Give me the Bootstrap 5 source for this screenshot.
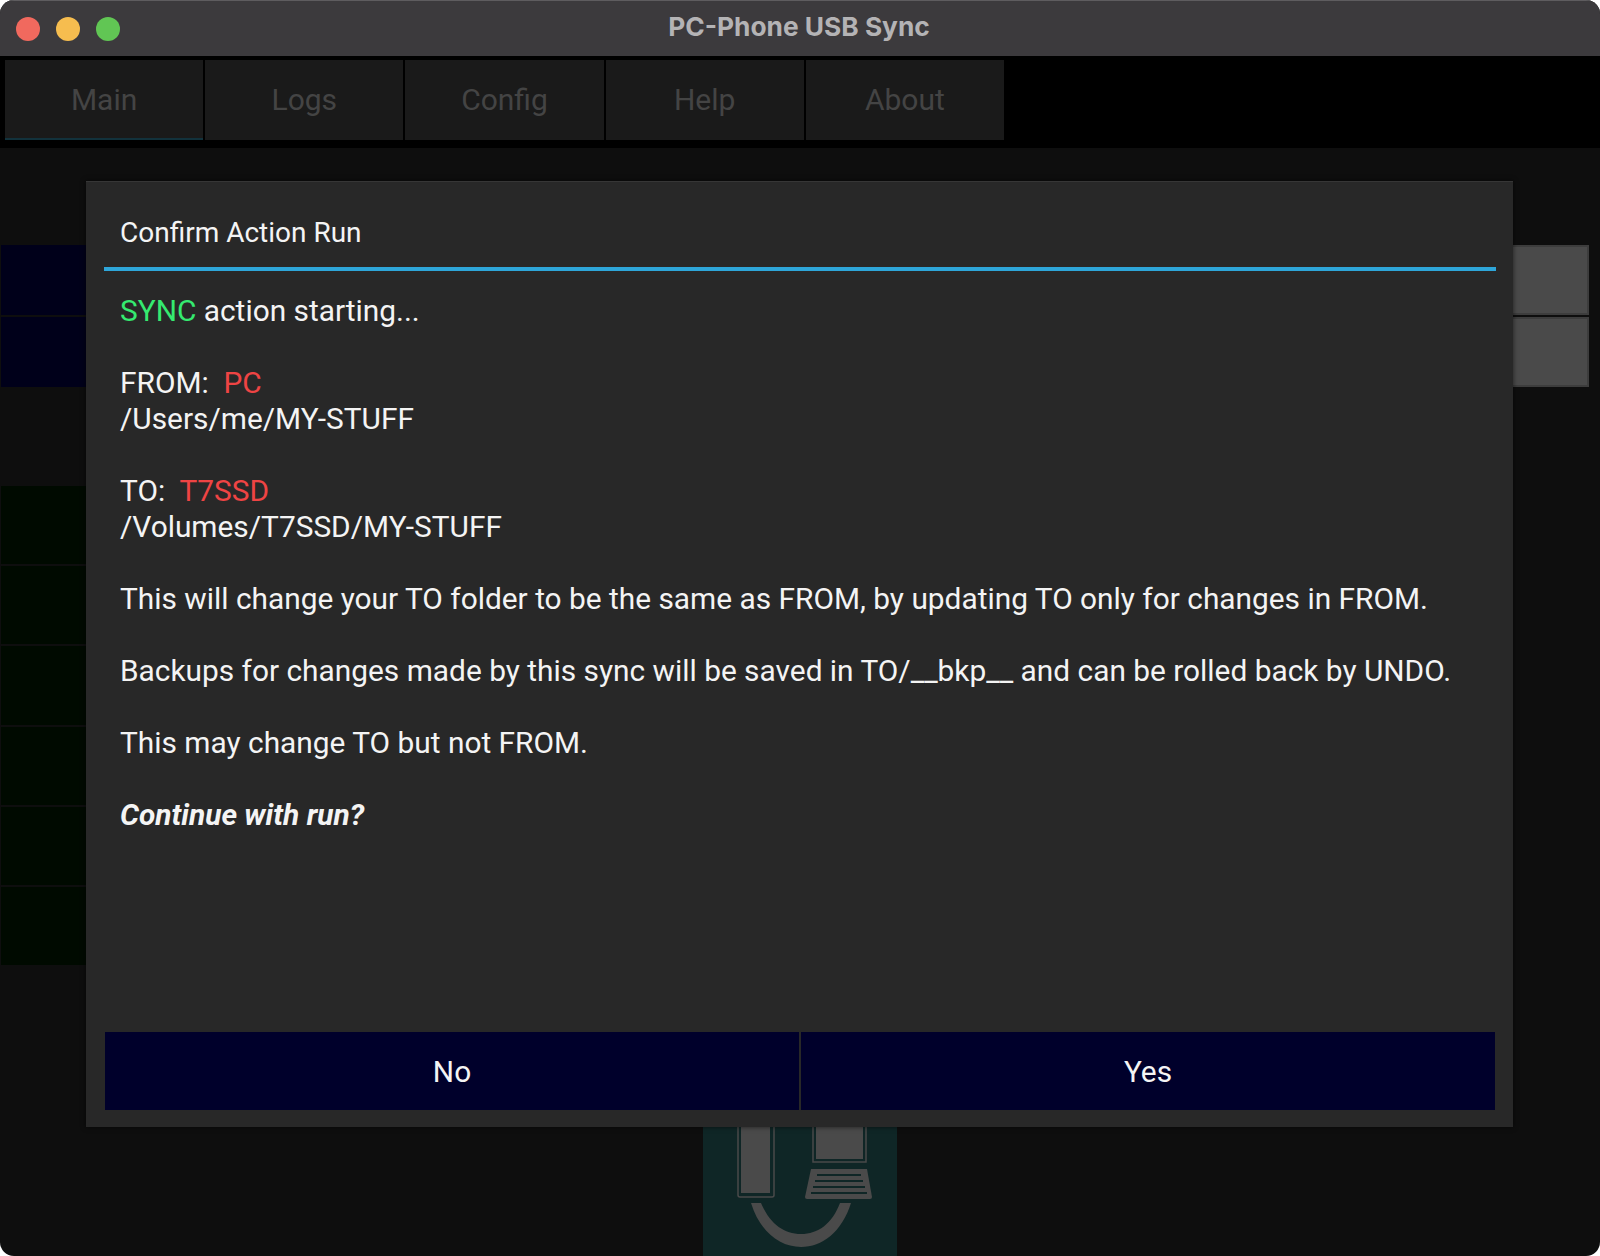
<!DOCTYPE html>
<html lang="en">
<head>
    <meta charset="UTF-8">
    <title>PC-Phone USB Sync</title>
    <link rel="stylesheet" href="https://cdn.jsdelivr.net/npm/bootstrap@5.3.0/dist/css/bootstrap.min.css">
    <style>
        html, body {
            height: 100%;
            background: #fff;
        }
        body {
            font-family: Roboto, sans-serif;
            overflow: hidden;
        }
        #win {
            position: relative;
            width: 1600px;
            height: 1256px;
            border-radius: 14px;
            overflow: hidden;
            background: #0e0e0e;
        }
        #titlebar {
            height: 56px;
            background: #3c3a3d;
            border-top: 1px solid #5e5c5f;
            padding: 0 16px;
        }
        .light-dots {
            gap: 16px;
        }
        .light-dot {
            width: 24px;
            height: 24px;
            border-radius: 50%;
        }
        #titlebar h1 {
            font-family: Inter, "Liberation Sans", sans-serif;
            font-size: 26.3px;
            font-weight: 700;
            color: #b4b3b5;
            margin: 0 0 4px;
        }
        #tabbar {
            height: 92px;
            background: #000;
            padding: 4px 5px 8px;
            gap: 2px;
        }
        .tab-btn {
            width: 198.2px;
            background: #1a1a1a;
            color: #444;
            font-size: 30px;
            border-bottom: 2px solid transparent;
        }
        .tab-on {
            border-bottom-color: #12323c;
        }
        #under {
            padding: 97px 11px 0 1px;
        }
        .pick-row {
            height: 70px;
            margin-bottom: 2px;
        }
        .pick-blue {
            background: #00001a;
        }
        .pick-grey {
            background: #4a4a4a;
            border: 2px solid #3d3d3d;
        }
        #green-rows {
            margin-top: 99px;
            width: 800px;
        }
        .green-row {
            height: 78.2px;
            margin-bottom: 2px;
            background: #000a00;
        }
        #logo-box {
            position: absolute;
            left: 703px;
            top: 1040px;
            width: 194px;
            height: 216px;
            background: #0f2626;
        }
        #dialog {
            position: absolute;
            left: 86px;
            top: 181px;
            width: 1427px;
            height: 946px;
            background: #282828;
            box-shadow: inset 0 1px 0 #363636, 0 0 5px rgba(0, 0, 0, 0.6);
            padding: 0 17px 17px 18px;
            color: #f4f4f4;
            font-size: 29.85px;
            line-height: 36px;
        }
        #dialog-title {
            height: 90px;
            padding: 0 16px 16px;
            border-bottom: 4px solid #2ea6d9;
            font-size: 28px;
        }
        #dialog-body {
            padding: 22px 16px 0;
        }
        #dialog-body p {
            margin-bottom: 36px;
        }
        .txt-green { color: #35ea70; }
        .txt-red { color: #ef4444; }
        #answers {
            gap: 2px;
            padding: 0 1px;
        }
        .ans-btn {
            height: 78px;
            padding-top: 8px;
            background: #00002b;
            color: #f4f4f4;
            font-size: 29.85px;
            border: 0;
            border-radius: 0;
        }
    </style>
</head>
<body>
    <div id="win">
        <div id="titlebar" class="d-flex align-items-center">
            <div class="light-dots d-flex">
                <div class="light-dot" style="background:#f1695e"></div>
                <div class="light-dot" style="background:#f6bd4f"></div>
                <div class="light-dot" style="background:#61c654"></div>
            </div>
            <h1 class="flex-grow-1 text-center">PC-Phone USB Sync</h1>
            <div style="width:106px"></div>
        </div>

        <div id="tabbar" class="d-flex">
            <div class="tab-btn tab-on d-flex align-items-center justify-content-center">Main</div>
            <div class="tab-btn d-flex align-items-center justify-content-center">Logs</div>
            <div class="tab-btn d-flex align-items-center justify-content-center">Config</div>
            <div class="tab-btn d-flex align-items-center justify-content-center">Help</div>
            <div class="tab-btn d-flex align-items-center justify-content-center">About</div>
        </div>

        <div id="under">
            <div class="pick-row d-flex"><div class="pick-blue w-50"></div><div class="pick-grey w-50"></div></div>
            <div class="pick-row d-flex"><div class="pick-blue w-50"></div><div class="pick-grey w-50"></div></div>
            <div id="green-rows">
                <div class="green-row"></div>
                <div class="green-row"></div>
                <div class="green-row"></div>
                <div class="green-row"></div>
                <div class="green-row"></div>
                <div class="green-row"></div>
            </div>
        </div>

        <div id="logo-box">
            <svg width="194" height="216" viewBox="703 1040 194 216">
                <rect x="738" y="1040" width="36" height="157" rx="2" fill="none" stroke="#4a4a4a" stroke-width="1.5"/>
                <rect x="741" y="1040" width="29" height="153" fill="#4a4a4a"/>
                <rect x="813" y="1040" width="53" height="122" fill="none" stroke="#4a4a4a" stroke-width="1.5"/>
                <rect x="816" y="1040" width="47" height="119" fill="#4a4a4a"/>
                <path d="M811 1169H867L872 1197Q872 1199 870 1199H807Q805 1199 805 1197Z" fill="#4a4a4a"/>
                <path d="M817 1175H861M815 1181H863M813 1187H865M811 1193H867" stroke="#0f2626" stroke-width="2"/>
                <path d="M751 1203C760 1232 780 1247 801 1247C822 1247 842 1232 851 1203H840C832 1224 818 1234 801 1234C784 1234 770 1224 761 1203Z" fill="#4a4a4a"/>
            </svg>
        </div>

        <div id="dialog" class="d-flex flex-column">
            <div id="dialog-title" class="d-flex align-items-end">Confirm Action Run</div>
            <div id="dialog-body" class="flex-grow-1">
                <p><span class="txt-green">SYNC</span> action starting...</p>
                <p>FROM:&nbsp; <span class="txt-red">PC</span><br>/Users/me/MY-STUFF</p>
                <p>TO:&nbsp; <span class="txt-red">T7SSD</span><br>/Volumes/T7SSD/MY-STUFF</p>
                <p>This will change your TO folder to be the same as FROM, by updating TO only for changes in FROM.</p>
                <p>Backups for changes made by this sync will be saved in TO/__bkp__ and can be rolled back by UNDO.</p>
                <p>This may change TO but not FROM.</p>
                <p class="fw-bold fst-italic">Continue with run?</p>
            </div>
            <div id="answers" class="d-flex">
                <button class="btn ans-btn w-50">No</button>
                <button class="btn ans-btn w-50">Yes</button>
            </div>
        </div>
    </div>

    <script src="https://cdn.jsdelivr.net/npm/bootstrap@5.3.0/dist/js/bootstrap.bundle.min.js"></script>
</body>
</html>
